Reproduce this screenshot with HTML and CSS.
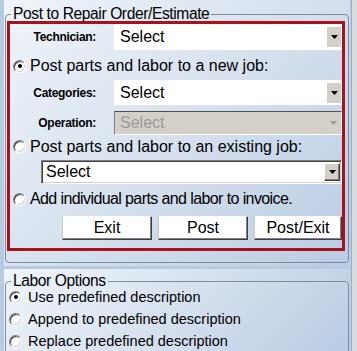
FILE: index.html
```html
<!DOCTYPE html>
<html lang="en">
<head>
    <meta charset="UTF-8">
    <title>Post to Repair Order</title>
    <link rel="stylesheet" href="styles.css">
</head>
<body>
<div class="screen">
    <div class="main">
        <section class="panel panel_post">
            <fieldset class="group">
                <legend>Post to Repair Order/Estimate</legend>
                <div class="redbox">
                    <div class="field_row row_tech">
                        <label class="field_label">Technician:</label>
                        <div class="combo">
                            <span class="combo_text">Select</span>
                            <span class="combo_btn"><svg width="7" height="4"><polygon points="0,0 7,0 3.5,4" fill="#000"/></svg></span>
                        </div>
                    </div>
                    <div class="radio_row row_new">
                        <span class="radio checked"></span>
                        <span>Post parts and labor to a new job:</span>
                    </div>
                    <div class="field_row row_cat">
                        <label class="field_label">Categories:</label>
                        <div class="combo">
                            <span class="combo_text">Select</span>
                            <span class="combo_btn"><svg width="7" height="4"><polygon points="0,0 7,0 3.5,4" fill="#000"/></svg></span>
                        </div>
                    </div>
                    <div class="field_row row_op">
                        <label class="field_label">Operation:</label>
                        <div class="combo disabled">
                            <span class="combo_text">Select</span>
                            <span class="combo_btn"><svg width="7" height="4"><polygon points="0,0 7,0 3.5,4" fill="#9a9a9a"/></svg></span>
                        </div>
                    </div>
                    <div class="radio_row row_existing">
                        <span class="radio"></span>
                        <span>Post parts and labor to an existing job:</span>
                    </div>
                    <div class="combo sunken">
                        <span class="combo_text">Select</span>
                        <span class="combo_btn raised"><svg width="7" height="4"><polygon points="0,0 7,0 3.5,4" fill="#000"/></svg></span>
                    </div>
                    <div class="radio_row row_invoice">
                        <span class="radio"></span>
                        <span class="tight">Add individual parts and labor to invoice.</span>
                    </div>
                    <div class="buttons">
                        <button class="btn">Exit</button>
                        <button class="btn">Post</button>
                        <button class="btn btn_last">Post/Exit</button>
                    </div>
                </div>
            </fieldset>
        </section>
        <section class="panel panel_labor">
            <fieldset class="group group_labor">
                <legend>Labor Options</legend>
                <div class="labor_list">
                    <div class="labor_row"><span class="radio checked"></span><span>Use predefined description</span></div>
                    <div class="labor_row"><span class="radio"></span><span>Append to predefined description</span></div>
                    <div class="labor_row"><span class="radio"></span><span>Replace predefined description</span></div>
                </div>
            </fieldset>
        </section>
    </div>
    <div class="scrollbar"></div>
</div>
</body>
</html>
```

FILE: styles.css
```css
body {
    margin: 0;
    font-family: "Liberation Sans", Arial, sans-serif;
    font-size: 16px;
    color: #000;
    background: #b6cae2;
}

.screen {
    display: flex;
    width: 357px;
    height: 351px;
    overflow: hidden;
}

.main {
    width: 351px;
    display: flex;
    flex-direction: column;
    gap: 3px;
}

.panel {
    margin-left: 4px;
    width: 346px;
    overflow: hidden;
    background: linear-gradient(135deg, #f0f4fa 0%, #d6e1ee 50%, #b9cce4 100%);
}

.panel_post {
    height: 266px;
    flex-shrink: 0;
}

.panel_labor {
    flex: 1;
}

.scrollbar {
    width: 6px;
    box-sizing: border-box;
    background: #d8dbe0;
    border-left: 1px solid #9fb0c6;
}

.group {
    margin: 5px 0 0 1px;
    width: 344px;
    min-width: 0;
    box-sizing: border-box;
    padding: 0 0 11px;
    border: 1px solid #7f8b9a;
    border-radius: 4px;
}

.group legend {
    margin-left: 5px;
    padding: 0 2px;
    font-size: 15.6px;
    line-height: 18px;
    letter-spacing: -0.4px;
}

.redbox {
    margin: -2px 0 0 1px;
    width: 338px;
    height: 230px;
    box-sizing: border-box;
    border: 3px solid #a8131b;
    display: flex;
    flex-direction: column;
}

.field_row {
    display: flex;
    align-items: center;
}

.field_label {
    width: 104px;
    box-sizing: border-box;
    padding-right: 18px;
    text-align: right;
    font-size: 12px;
    font-weight: bold;
    letter-spacing: -0.3px;
}

.row_tech { height: 26px; }
.row_cat { height: 25px; }
.row_op { height: 24px; margin-top: 6px; }

.combo {
    flex: 1;
    align-self: stretch;
    display: flex;
    align-items: center;
    background: #fff;
}

.combo_text {
    flex: 1;
    padding-left: 6px;
}

.combo_btn {
    width: 14px;
    height: 20px;
    margin-right: 1px;
    display: flex;
    align-items: center;
    justify-content: center;
    background: #d4d0c8;
}

.combo.disabled {
    box-sizing: border-box;
    background: #d4d0c8;
    border: 1px solid;
    border-color: #505050 #fff #fff #808080;
    color: #9a9a9a;
}

.combo.disabled .combo_text {
    padding-left: 5px;
}

.combo.sunken {
    flex: none;
    height: 24px;
    margin: 2px 0 0 31px;
    box-sizing: border-box;
    border: 1px solid;
    border-color: #808080 #fff #fff #808080;
    box-shadow: inset 1px 1px 0 #404040, inset -1px -1px 0 #d4d0c8;
}

.combo.sunken .combo_text {
    padding-left: 4px;
}

.combo_btn.raised {
    width: 16px;
    height: 18px;
    margin-right: 1px;
    box-sizing: border-box;
    border: 1px solid;
    border-color: #fff #404040 #404040 #fff;
    box-shadow: inset -1px -1px 0 #808080;
}

.radio_row {
    display: flex;
    align-items: center;
    gap: 4px;
    padding-left: 3px;
}

.row_new { height: 28px; padding-top: 2px; }
.row_existing { height: 23px; }
.row_invoice { height: 30px; }

.tight {
    letter-spacing: -0.6px;
}

.radio {
    width: 13px;
    height: 13px;
    flex-shrink: 0;
    box-sizing: border-box;
    border-radius: 50%;
    background: #fff;
    border: 1px solid;
    border-color: #808080 #fff #fff #808080;
    box-shadow: inset 1px 1px 0 #404040, inset -1px -1px 0 #d4d0c8;
    display: flex;
    align-items: center;
    justify-content: center;
}

.radio.checked::after {
    content: "";
    width: 4px;
    height: 4px;
    border-radius: 50%;
    background: #000;
}

.buttons {
    display: flex;
    gap: 6px;
    margin: 2px 0 0 52px;
}

.btn {
    width: 90px;
    height: 24px;
    padding: 0;
    font-family: inherit;
    font-size: 16px;
    color: #000;
    background: #fff;
    border: 1px solid;
    border-color: #fff #404040 #404040 #c8c8c8;
    box-shadow: inset -1px -1px 0 #808080;
}

.btn_last {
    width: 88px;
}

.group_labor {
    margin-top: 3px;
    height: 100px;
}

.labor_list {
    margin-top: -4px;
    font-size: 14.5px;
}

.labor_row {
    height: 22px;
    display: flex;
    align-items: center;
    gap: 6px;
    padding-left: 3px;
}
```
